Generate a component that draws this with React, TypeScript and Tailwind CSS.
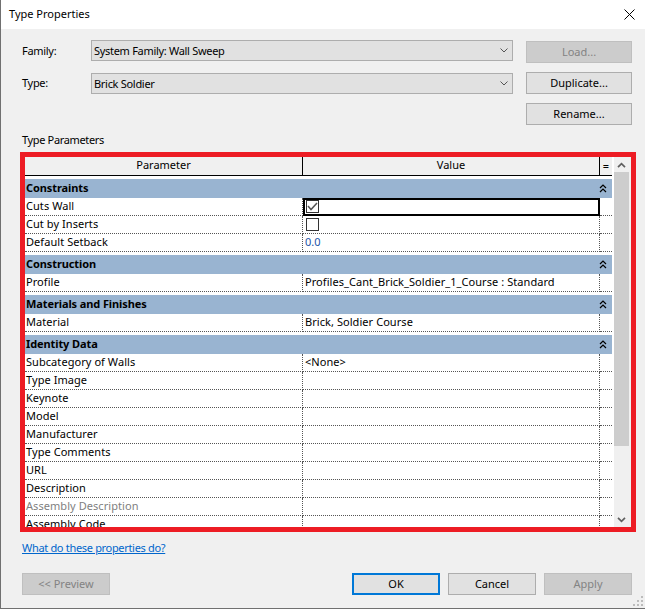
import React from "react";

function Chevron({ up, className }: { up?: boolean; className?: string }) {
  return (
    <svg width="9" height="6" viewBox="0 0 9 6" className={className} fill="none" stroke="currentColor" strokeWidth="1.7">
      <path d={up ? "M1 5.2 L4.5 1.7 L8 5.2" : "M1 0.8 L4.5 4.3 L8 0.8"} />
    </svg>
  );
}

function DoubleUp() {
  return (
    <svg width="8" height="9" viewBox="0 0 8 9" fill="none" stroke="#000" strokeWidth="1.2">
      <path d="M1 4 L4 1 L7 4" />
      <path d="M1 8 L4 5 L7 8" />
    </svg>
  );
}

function Btn({ children, disabled, primary, w = "w-[106px]" }: { children: React.ReactNode; disabled?: boolean; primary?: boolean; w?: string }) {
  const base = "h-[22px] flex items-center justify-center pb-[2px] text-[11px] leading-none";
  if (disabled) return <div className={`${base} ${w} bg-[#cccccc] border border-[#bfbfbf] text-[#838383]`}>{children}</div>;
  if (primary) return <div className={`${base} ${w} bg-[#e1e1e1] border-2 border-[#0078d7] text-black`}>{children}</div>;
  return <div className={`${base} ${w} bg-[#e1e1e1] border border-[#adadad] text-black`}>{children}</div>;
}

function Combo({ label, value, labelClass }: { label: string; value: string; labelClass?: string }) {
  return (
    <div className="flex items-center h-[21px]">
      <div className={`w-[69px] ml-[1px] text-[11px] tracking-[-0.3px] text-black ${labelClass ?? ""}`}>{label}</div>
      <div className="w-[422px] h-[21px] bg-[#e1e1e1] border border-[#adadad] flex items-center justify-between pl-[2px] pr-[4px] text-[11px] tracking-[-0.3px] text-black">
        <span className="mt-[2px]">{value}</span>
        <svg width="8" height="5" viewBox="0 0 8 5" fill="none" stroke="#555" strokeWidth="1"><path d="M0.5 0.5 L4 4 L7.5 0.5" /></svg>
      </div>
    </div>
  );
}

function Group({ title }: { title: string }) {
  return (
    <div className="flex h-[19px] bg-[#99b4d1] items-center justify-between font-bold text-[11px] tracking-[-0.1px] text-black pl-[1px] pr-[5px] leading-[15px]">
      <span className="-mt-[3px]">{title}</span>
      <DoubleUp />
    </div>
  );
}

function Row({ label, value, muted, blue, check, focused }: { label: string; value?: string; muted?: boolean; blue?: boolean; check?: "on" | "off"; focused?: boolean }) {
  return (
    <div className="flex h-[18px] shrink-0 text-[11px] tracking-[0.06px] bg-white">
      <div className={`w-[278px] pl-[1px] border-b border-r border-dotted border-[#555555] leading-[16px] ${muted ? "text-[#7f7f7f]" : "text-black"}`}>{label}</div>
      <div className={`w-[297px] flex items-center pl-[2px] border-b border-r border-dotted border-[#555555] ${blue ? "text-[#1c54a8]" : "text-black"} leading-[16px] relative`}>
        {focused && <div className="absolute left-0 top-0 w-[297px] h-[18px] border-2 border-black bg-white" />}
        {check ? (
          <div className="relative w-[13px] h-[13px] ml-[1px] border border-[#333333] bg-white">
            {check === "on" && (
              <svg width="11" height="11" viewBox="0 0 11 11" fill="none" stroke="#555" strokeWidth="1.5" className="block"><path d="M1 5 L4 8.5 L10 2" /></svg>
            )}
          </div>
        ) : (
          <span className="-mt-[1px]">{value}</span>
        )}
      </div>
      <div className="w-[12px] border-b border-dotted border-[#555555]" />
    </div>
  );
}

function Gap() {
  return <div className="h-[3px] shrink-0 bg-white" />;
}

export default function App() {
  return (
    <div className="w-[645px] h-[609px] overflow-hidden bg-[#f0f0f0] border-l border-l-[#707070] border-b border-b-[#707070] font-['Noto_Sans','Open_Sans',sans-serif] relative">
      <div className="h-[29px] bg-white flex items-center justify-between pl-[8px] pr-[10px] text-[11px] text-black">
        <span>Type Properties</span>
        <svg width="11" height="11" viewBox="0 0 11 11" stroke="#000" strokeWidth="1"><path d="M0.5 0.5 L10.5 10.5 M10.5 0.5 L0.5 10.5" /></svg>
      </div>
      <div className="pl-[20px] pt-[11px]">
        <div className="flex gap-[13px]">
          <div className="flex flex-col gap-[12px]">
            <Combo label="Family:" value="System Family: Wall Sweep" labelClass="mt-[2px]" />
            <Combo label="Type:" value="Brick Soldier" />
          </div>
          <div className="flex flex-col gap-[9px] mt-[1px]">
            <Btn disabled>Load...</Btn>
            <Btn>Duplicate...</Btn>
            <Btn>Rename...</Btn>
          </div>
        </div>
        <div className="mt-[7px] ml-[1px] h-[16px] leading-[16px] text-[11px] tracking-[-0.35px] text-black">Type Parameters</div>
        <div className="mt-[4px] -ml-[1px] w-[616px] h-[380px] border-[5px] border-[#ed1c24] flex overflow-hidden bg-white">
          <div className="w-[587px] h-[370px] overflow-hidden shrink-0">
            <div className="flex h-[19px] bg-[#f0f0f0] border-b border-black text-[11px] leading-[16px] text-black">
              <div className="w-[278px] border-r border-black text-center">Parameter</div>
              <div className="w-[297px] border-r border-black text-center">Value</div>
              <div className="w-[12px] text-center leading-[17px]">=</div>
            </div>
            <Gap />
            <Group title="Constraints" />
            <Row label="Cuts Wall" check="on" focused />
            <Row label="Cut by Inserts" check="off" />
            <Row label="Default Setback" value="0.0" blue />
            <Gap />
            <Group title="Construction" />
            <Row label="Profile" value="Profiles_Cant_Brick_Soldier_1_Course : Standard" />
            <Gap />
            <Group title="Materials and Finishes" />
            <Row label="Material" value="Brick, Soldier Course" />
            <Gap />
            <Group title="Identity Data" />
            <Row label="Subcategory of Walls" value="<None>" />
            <Row label="Type Image" />
            <Row label="Keynote" />
            <Row label="Model" />
            <Row label="Manufacturer" />
            <Row label="Type Comments" />
            <Row label="URL" />
            <Row label="Description" />
            <Row label="Assembly Description" muted />
            <Row label="Assembly Code" />
          </div>
          <div className="flex-1 ml-[2px] bg-[#f0f0f0] flex flex-col">
            <div className="h-[15px] w-[15px] flex items-center justify-center"><Chevron up className="text-[#606060]" /></div>
            <div className="w-[15px] h-[274px] bg-[#cdcdcd]" />
            <div className="flex-1" />
            <div className="h-[15px] w-[15px] flex items-center justify-center"><Chevron className="text-[#606060]" /></div>
          </div>
        </div>
        <div className="mt-[8px] ml-[1px] h-[16px] leading-[16px] text-[11px] tracking-[-0.32px] text-[#0066cc] underline">What do these properties do?</div>
        <div className="mt-[17px] ml-[1px] flex">
          <Btn disabled w="w-[88px]">&lt;&lt; Preview</Btn>
          <div className="ml-[242px] flex gap-[8px]">
            <Btn primary w="w-[88px]">OK</Btn>
            <Btn w="w-[88px]">Cancel</Btn>
            <Btn disabled w="w-[88px]">Apply</Btn>
          </div>
        </div>
      </div>
      <svg width="11" height="11" viewBox="0 0 11 11" className="absolute right-[1px] bottom-[1px]" fill="#bcbcbc">
        <rect x="8" y="0" width="2" height="2" /><rect x="4" y="4" width="2" height="2" /><rect x="8" y="4" width="2" height="2" /><rect x="0" y="8" width="2" height="2" /><rect x="4" y="8" width="2" height="2" /><rect x="8" y="8" width="2" height="2" />
      </svg>
    </div>
  );
}
